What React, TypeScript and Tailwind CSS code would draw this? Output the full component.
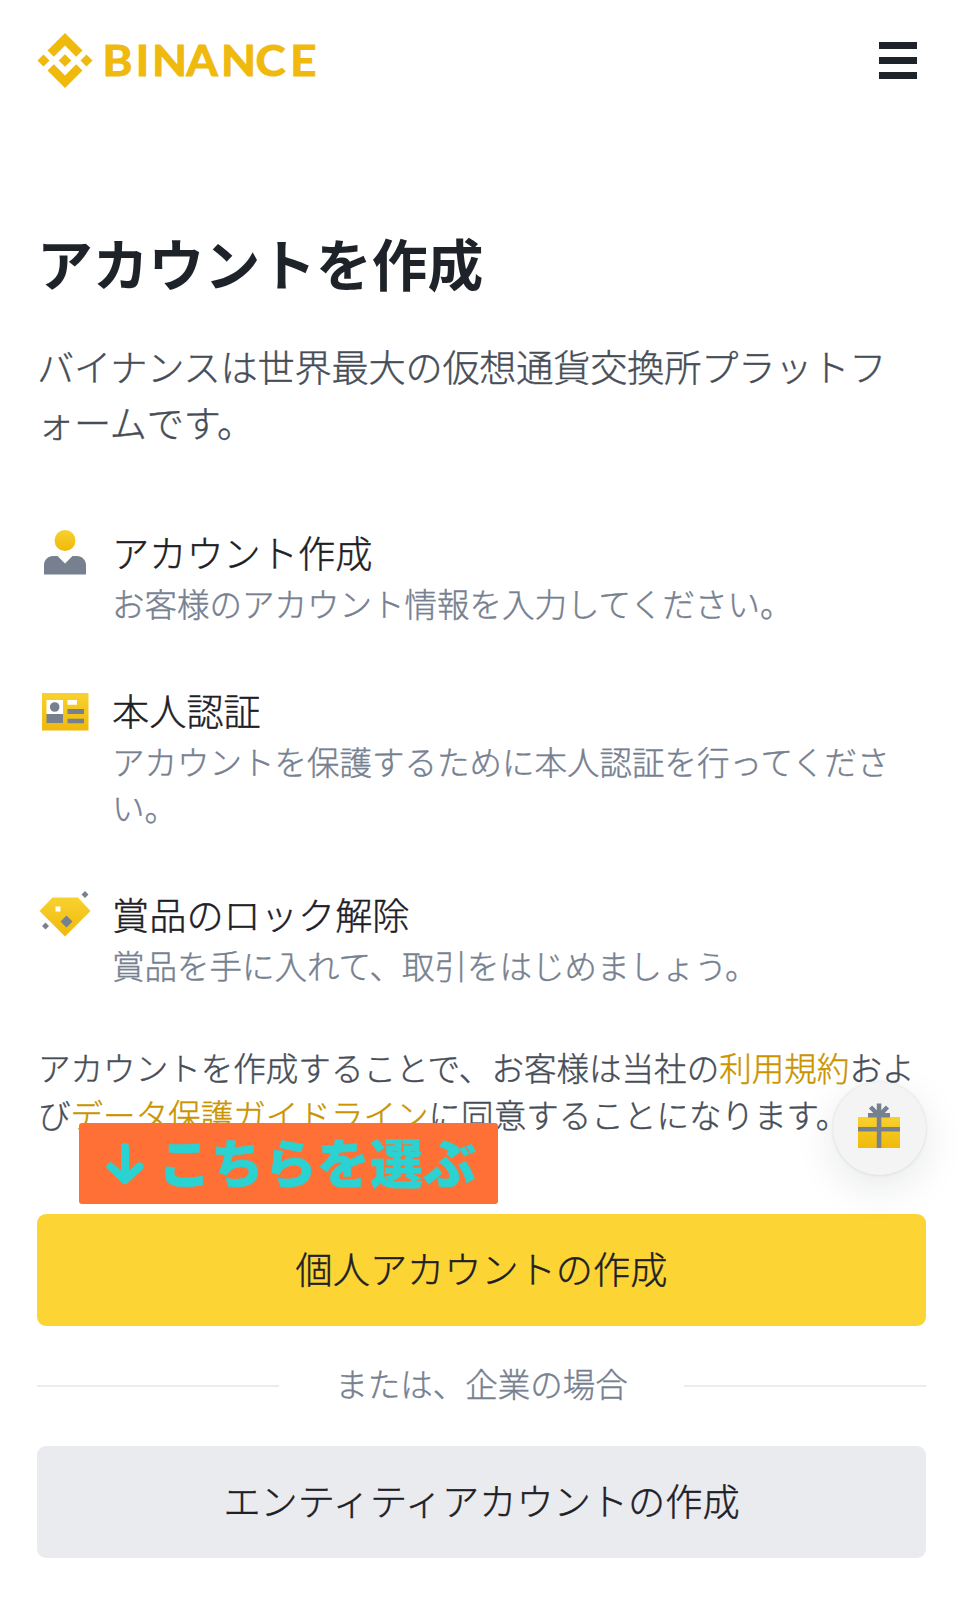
import type { ReactNode } from "react";

function Logo() {
  return (
    <svg width="284" height="60" viewBox="0 0 284 60" fill="#efb90d">
      <path d="M28 3 45.500 20.500l-6.300 6.300L28 15.600 16.800 26.800l-6.300-6.300z" />
      <path d="M28 58l17.500-17.500-6.300-6.300L28 45.400 16.800 34.200l-6.300 6.300z" />
      <path d="m.5 30.500 6-6 6 6-6 6zM43.500 30.500l6-6 6 6-6 6zM28 24.200l6.300 6.300-6.300 6.300-6.300-6.300z" />
      <text
        transform="scale(1.07 1)"
        x="61.200 92.300 107.500 139.600 171.900 204.300 236.600"
        y="45.800"
        fontSize="42.500"
        fontWeight="700"
        fontFamily="Lato, sans-serif"
        stroke="#efb90d"
        strokeWidth="1"
      >
        BINANCE
      </text>
    </svg>
  );
}

function Gold({ id }: { id: string }) {
  return (
    <defs>
      <linearGradient id={id} x1="0" y1="0" x2="0" y2="1">
        <stop offset="0" stopColor="#f8d12f" />
        <stop offset="1" stopColor="#f0b90b" />
      </linearGradient>
    </defs>
  );
}

function UserIcon() {
  return (
    <svg width="56" height="56" viewBox="0 0 56 56">
      <Gold id="gold-user" />
      <circle cx="28" cy="14.5" r="10.5" fill="url(#gold-user)" />
      <path d="M7 48.5V39c0-5 4-9 9-9h4.5l7.5 7.5 7.5-7.5H40c5 0 9 4 9 9v9.5z" fill="#76808f" />
    </svg>
  );
}

function IdCardIcon() {
  return (
    <svg width="56" height="56" viewBox="0 0 56 56">
      <Gold id="gold-card" />
      <path d="M5 9h46.5v37.5H5z" fill="url(#gold-card)" />
      <path d="M9.5 16H26v14H9.5zM30.500 16H40v4.700h-9.500z" fill="#fff" />
      <circle cx="17.7" cy="23" r="4.8" fill="#76808f" />
      <path d="M9.5 30H26v9H9.500zM30.500 25H47v5H30.500zM30.500 34.700H47v4.500H30.500z" fill="#76808f" />
    </svg>
  );
}

function DiamondIcon() {
  return (
    <svg width="56" height="56" viewBox="0 0 56 56">
      <Gold id="gold-gem" />
      <path d="M15.5 9.500H41L53.500 23 28 48.500 2.500 23z" fill="url(#gold-gem)" />
      <path d="M18.5 18.500h5v5h-5z" fill="#fff" />
      <path
        d="m29.500 27.500 6 6-6 6-6-6zM48 3l3.500 3.500L48 10l-3.500-3.500zM8.500 34.500 12 38l-3.500 3.500L5 38z"
        fill="#76808f"
      />
    </svg>
  );
}

function GiftIcon() {
  return (
    <svg width="56" height="56" viewBox="0 0 56 56" className="-mt-1 mr-px">
      <Gold id="gold-gift" />
      <path d="M7 18h42v31H7z" fill="url(#gold-gift)" />
      <path d="M17 14h22v4.500H17zM25.800 4.500h4.500V49h-4.500zM7 28h42v4.500H7z" fill="#76808f" />
      <path d="m19.500 8 8.500 8.500L36.500 8" fill="none" stroke="#76808f" strokeWidth="4.500" />
    </svg>
  );
}

function Step({ icon, title, children }: { icon: ReactNode; title: string; children: ReactNode }) {
  return (
    <li className="flex gap-[19px]">
      <div className="size-14 shrink-0">{icon}</div>
      <div className="-mt-0.5">
        <h2 className="text-[37.2px] leading-[56px] text-[#1e2026]">{title}</h2>
        <p className="text-[32.5px] leading-[46.5px] text-[#76808f]">{children}</p>
      </div>
    </li>
  );
}

export default function App() {
  return (
    <div className="relative min-h-[1600px] w-full bg-white px-[37px] font-['Noto_Sans_CJK_JP',sans-serif] font-light text-[#474d57] [-webkit-text-stroke-width:0.4px]">
      <header className="flex h-[120px] items-center justify-between">
        <Logo />
        <button aria-label="menu" className="mr-[9px] flex w-[38px] flex-col gap-2">
          <span className="h-[7px] bg-[#1e2329]" />
          <span className="h-[7px] bg-[#1e2329]" />
          <span className="h-[7px] bg-[#1e2329]" />
        </button>
      </header>

      <main className="pt-[105px]">
        <h1 className="text-[55.8px] leading-[74px] font-bold text-[#1e2329] [-webkit-text-stroke-width:0]">
          アカウントを作成
        </h1>
        <p className="mt-[39px] text-[37.2px] leading-[56px] tracking-[-0.2px]">
          バイナンスは世界最大の仮想通貨交換所プラットフ
          <br />
          ォームです。
        </p>

        <ul className="mt-[76px] flex flex-col gap-[57px]">
          <Step icon={<UserIcon />} title="アカウント作成">
            お客様のアカウント情報を入力してください。
          </Step>
          <Step icon={<IdCardIcon />} title="本人認証">
            アカウントを保護するために本人認証を行ってくださ
            <br />
            い。
          </Step>
          <Step icon={<DiamondIcon />} title="賞品のロック解除">
            賞品を手に入れて、取引をはじめましょう。
          </Step>
        </ul>

        <p className="mt-14 pl-px text-[32.56px] leading-[46.5px] whitespace-nowrap">
          アカウントを作成することで、お客様は当社の
          <a className="text-[#c99400]">利用規約</a>およ
          <br />
          び<a className="text-[#c99400]">データ保護ガイドライン</a>に同意することになります。
        </p>

        <button className="mt-[77px] block h-28 w-full rounded-[9px] bg-[#fcd535] pb-0.5 text-[37.2px] text-[#1e2026]">
          個人アカウントの作成
        </button>
        <div className="flex h-[120px] items-center justify-between">
          <span className="h-0.5 w-[242px] bg-[#eaecef]" />
          <span className="pb-1.5 text-[32.5px] text-[#76808f]">または、企業の場合</span>
          <span className="h-0.5 w-[242px] bg-[#eaecef]" />
        </div>
        <button className="block h-28 w-full rounded-[9px] bg-[#eaebef] pb-0.5 text-[37.2px] text-[#1e2026]">
          エンティティアカウントの作成
        </button>
      </main>

      <div className="absolute top-[1123px] left-[79px] flex h-[81px] w-[419px] items-center rounded-[3px] bg-[#ff7036] pl-[27px] text-[#2bd2d2]">
        <svg width="38" height="44" viewBox="0 0 38 44" fill="none" stroke="currentColor" strokeWidth="8" strokeLinecap="round" strokeLinejoin="round">
          <path d="M19 5v33M4.5 24.5 19 38l14.500-13.500" />
        </svg>
        <span className="-mt-1 ml-3.5 text-[53px] leading-none font-black whitespace-nowrap">こちらを選ぶ</span>
      </div>

      <button
        aria-label="gift"
        className="absolute top-[1082px] right-[37px] flex size-[93px] items-center justify-center rounded-full bg-[#f4f4f4] shadow-[0_0_3px_rgba(24,26,32,0.15),0_12px_40px_rgba(24,26,32,0.1)]"
      >
        <GiftIcon />
      </button>
    </div>
  );
}
